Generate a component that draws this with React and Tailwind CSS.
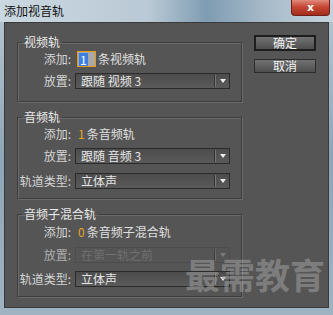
import React from "react";

const font = { fontFamily: '"Noto Sans CJK SC", "Noto Sans", sans-serif' };

function Select({ value, disabled }) {
  return (
    <div
      className={`flex h-[16px] w-[155px] items-center border ${
        disabled
          ? "border-[#4a4a4a] bg-[#555555]"
          : "border-[#2b2b2b] bg-[linear-gradient(180deg,#4c4c4c,#5a5a5a)]"
      }`}
    >
      <span
        className={`flex-1 pl-[5px] text-[12px] leading-[14px] ${
          disabled ? "text-[#7c7c7c]" : "text-[#e6e6e6]"
        }`}
      >
        {value}
      </span>
      <div className="flex h-full items-center">
        <div className="h-[12px] w-px bg-[#333333]" />
        <div className="h-[12px] w-px bg-[#777777]" />
        <div className="flex w-[13px] items-center justify-center">
          <div
            className={`h-0 w-0 border-x-[3px] border-t-[4px] border-x-transparent ${
              disabled ? "border-t-[#8a8a8a]" : "border-t-[#eeeeee]"
            }`}
          />
        </div>
      </div>
    </div>
  );
}

function Row({ label, children, className = "" }) {
  return (
    <div className={`grid h-[16px] grid-cols-[53px_1fr] items-center gap-x-[4px] ${className}`}>
      <span className="text-right text-[12px] leading-[14px] text-[#d4d4d4]">{label}</span>
      <div className="flex items-center">{children}</div>
    </div>
  );
}

function Group({ title, children, className = "" }) {
  return (
    <fieldset className={`w-[225px] border border-[#3e3e3e] shadow-[inset_1px_1px_0_#6a6a6a,1px_1px_0_#6a6a6a] ${className}`}>
      <legend className="ml-[4px] px-[2px] text-[12px] leading-[14px] text-[#e8e8e8]">{title}</legend>
      {children}
    </fieldset>
  );
}

function Button({ label, primary }) {
  return (
    <button
      type="button"
      className={`flex w-[62px] items-center justify-center bg-[linear-gradient(180deg,#727272,#4e4e4e)] text-[12px] leading-[12px] text-[#f2f2f2] ${
        primary ? "h-[16px] border-2 border-[#1e1e1e]" : "h-[14px] border border-[#2c2c2c]"
      }`}
    >
      {label}
    </button>
  );
}

export default function App() {
  return (
    <div
      className="flex h-[315px] w-[333px] flex-col bg-[linear-gradient(180deg,#b7c7d3,#8ea6b8_50%,#9fb3c2)]"
      style={font}
    >
      <div className="relative h-[22px] bg-[linear-gradient(90deg,#cbd8e1_0%,#b9c9d5_45%,#7f9cb2_62%,#a7bac9_80%,#c6d3dc_100%)]">
        <span className="absolute left-[4px] top-[4px] text-[12px] leading-[14px] text-[#111111]">添加视音轨</span>
        <div className="absolute right-[3px] top-0 flex h-[16px] w-[39px] items-center justify-center rounded-b-[4px] border border-t-0 border-[#6e1f18] bg-[linear-gradient(180deg,#e08a7c,#c74735_45%,#a32c1c)]">
          <span className="text-[11px] font-bold leading-[11px] text-white" style={{ fontFamily: '"DejaVu Sans", sans-serif' }}>
            x
          </span>
        </div>
      </div>

      <div className="relative mx-[4px] mb-[7px] flex flex-1 gap-[12px] border border-[#3a3a3a] bg-[#555555] pl-[12px]">
        <div className="flex flex-col">
          <Group title="视频轨" className="mt-[12px] pb-[12px]">
            <Row label="添加:" className="mt-[2px]">
              <div className="ml-[2px] flex h-[16px] w-[19px] items-center border border-[#e89a10] bg-[#a9a9a9] pl-[1px]">
                <span className="bg-[#3d7fe0] px-[1px] text-[12px] leading-[13px] text-white">1</span>
              </div>
              <span className="ml-[2px] text-[12px] leading-[14px] text-[#e0e0e0]">条视频轨</span>
            </Row>
            <Row label="放置:" className="mt-[6px]">
              <Select value="跟随 视频 3" />
            </Row>
          </Group>

          <Group title="音频轨" className="mt-[8px] pb-[9px]">
            <Row label="添加:" className="mt-[2px]">
              <span className="ml-[3px] text-[12px] leading-[14px] text-[#e8a52a]">1</span>
              <span className="ml-[2px] text-[12px] leading-[14px] text-[#e0e0e0]">条音频轨</span>
            </Row>
            <Row label="放置:" className="mt-[6px]">
              <Select value="跟随 音频 3" />
            </Row>
            <Row label="轨道类型:" className="mt-[9px]">
              <Select value="立体声" />
            </Row>
          </Group>

          <Group title="音频子混合轨" className="mt-[8px] pb-[9px]">
            <Row label="添加:" className="mt-[3px]">
              <span className="ml-[3px] text-[12px] leading-[14px] text-[#e8a52a]">0</span>
              <span className="ml-[2px] text-[12px] leading-[14px] text-[#e0e0e0]">条音频子混合轨</span>
            </Row>
            <Row label="放置:" className="mt-[7px] opacity-70">
              <Select value="在第一轨之前" disabled />
            </Row>
            <Row label="轨道类型:" className="mt-[8px]">
              <Select value="立体声" />
            </Row>
          </Group>
        </div>

        <div className="flex flex-col gap-[8px] pt-[12px]">
          <Button label="确定" primary />
          <Button label="取消" />
        </div>

        <span className="pointer-events-none absolute right-[3px] top-[232px] text-[35px] font-bold leading-[38px] text-[#9a9a9a]/60">
          最需教育
        </span>
      </div>
    </div>
  );
}
